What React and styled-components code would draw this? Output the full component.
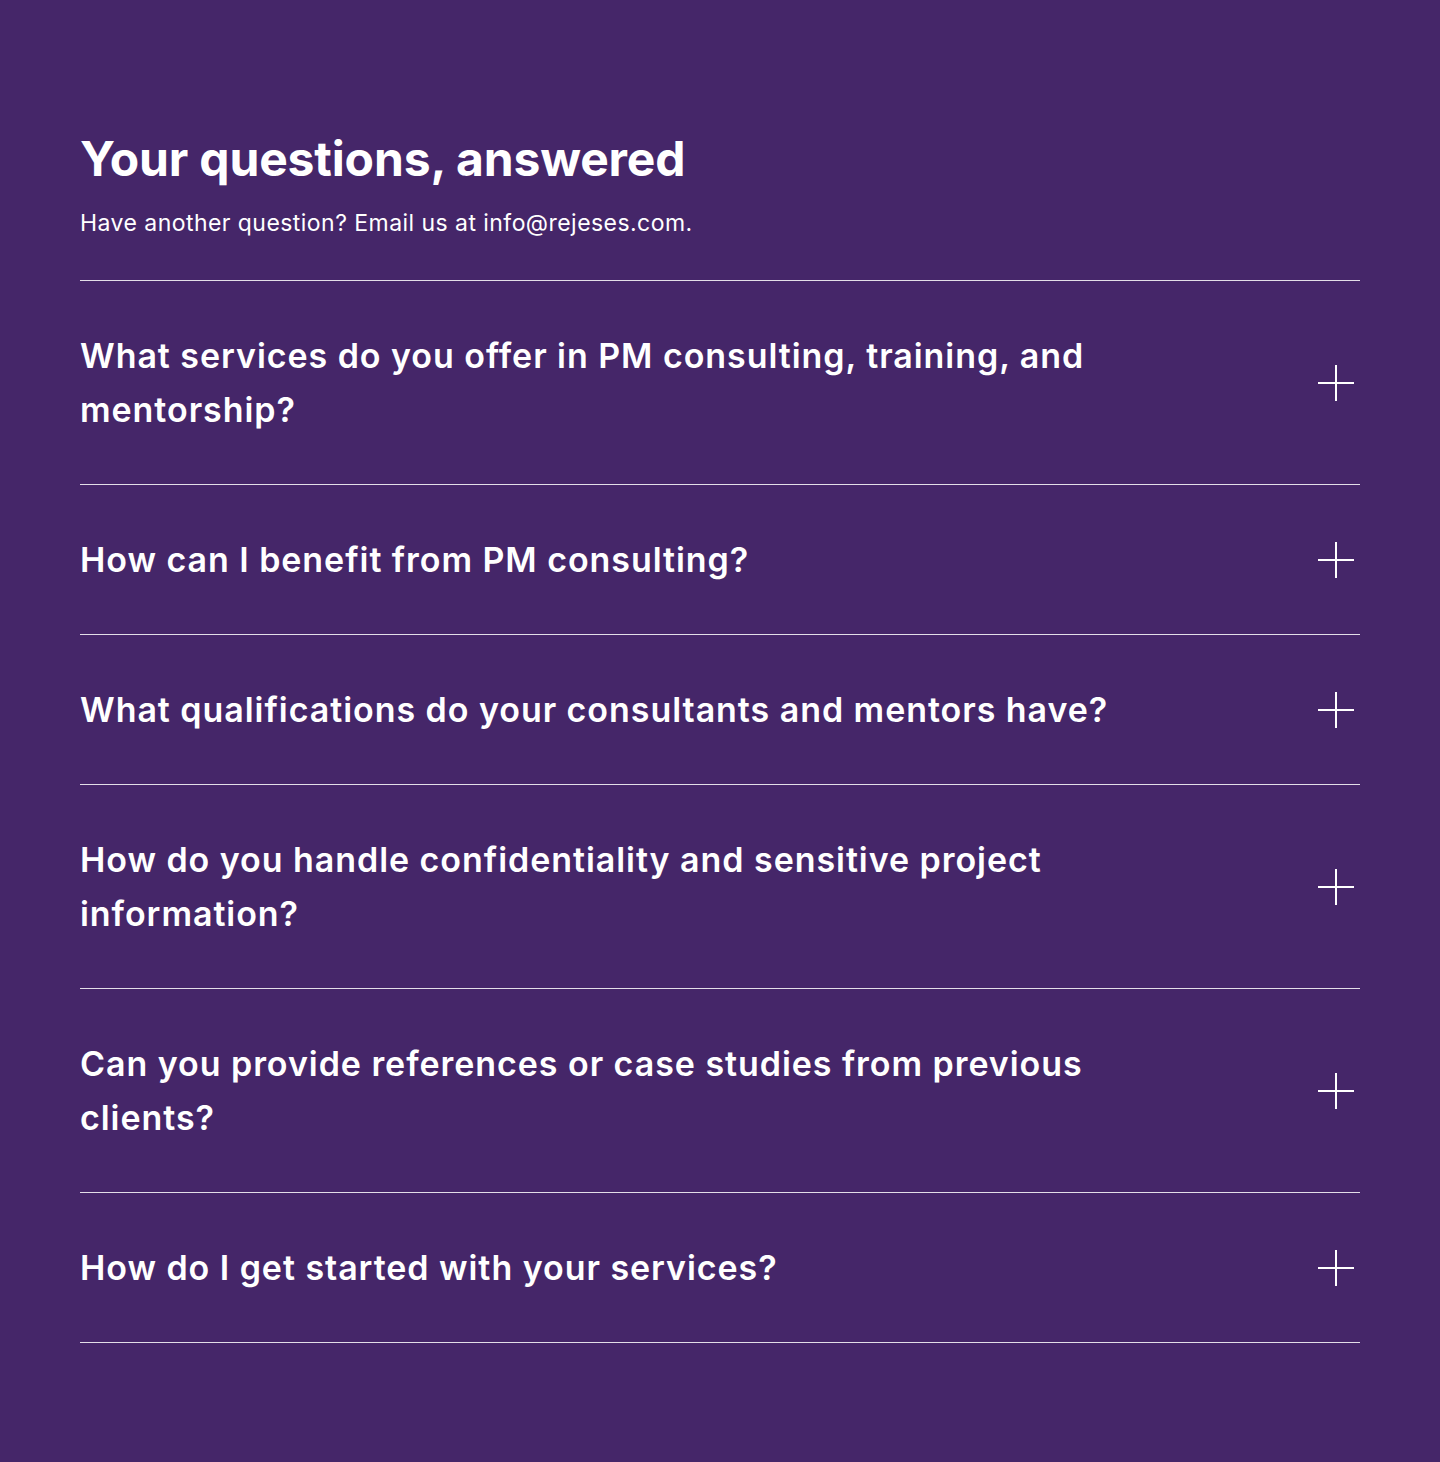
import React from "react";
import styled, { createGlobalStyle } from "styled-components";

const Global = createGlobalStyle`
  html, body { margin: 0; padding: 0; background: #452669; }
  body { font-family: Inter, "Liberation Sans", sans-serif; }
`;

const Section = styled.section`
  background: #452669;
  min-height: 1462px;
  box-sizing: border-box;
  padding: 131px 80px 80px;
  color: #ffffff;
`;

const Title = styled.h2`
  margin: 0;
  font-size: 48px;
  line-height: 56px;
  font-weight: 700;
  letter-spacing: -0.15px;
`;

const Subtitle = styled.p`
  margin: 20px 0 0;
  font-size: 23px;
  line-height: 32px;
  font-weight: 400;
  letter-spacing: 0.45px;
`;

const List = styled.div`
  margin-top: 41px;
  border-top: 1px solid rgba(255, 255, 255, 0.85);
`;

const Item = styled.div`
  display: flex;
  align-items: center;
  justify-content: space-between;
  gap: 40px;
  padding: 48px 0 47px;
  border-bottom: 1px solid rgba(255, 255, 255, 0.85);
`;

const Question = styled.h3`
  margin: 0;
  max-width: 1080px;
  font-size: 34px;
  line-height: 54px;
  font-weight: 600;
  letter-spacing: 0.95px;
`;

const IconBox = styled.span`
  flex: 0 0 40px;
  width: 40px;
  height: 40px;
  display: flex;
  align-items: center;
  justify-content: center;
  margin-right: 4px;
`;

const questions = [
  "What services do you offer in PM consulting, training, and mentorship?",
  "How can I benefit from PM consulting?",
  "What qualifications do your consultants and mentors have?",
  "How do you handle confidentiality and sensitive project information?",
  "Can you provide references or case studies from previous clients?",
  "How do I get started with your services?",
];

const Plus = () => (
  <svg width="36" height="36" viewBox="0 0 36 36" fill="none">
    <path d="M18 0V36M0 18H36" stroke="#fff" strokeWidth="2" />
  </svg>
);

export default function App() {
  return (
    <>
      <Global />
      <Section>
        <Title>Your questions, answered</Title>
        <Subtitle>Have another question? Email us at info@rejeses.com.</Subtitle>
        <List>
          {questions.map((q) => (
            <Item key={q}>
              <Question>{q}</Question>
              <IconBox>
                <Plus />
              </IconBox>
            </Item>
          ))}
        </List>
      </Section>
    </>
  );
}
